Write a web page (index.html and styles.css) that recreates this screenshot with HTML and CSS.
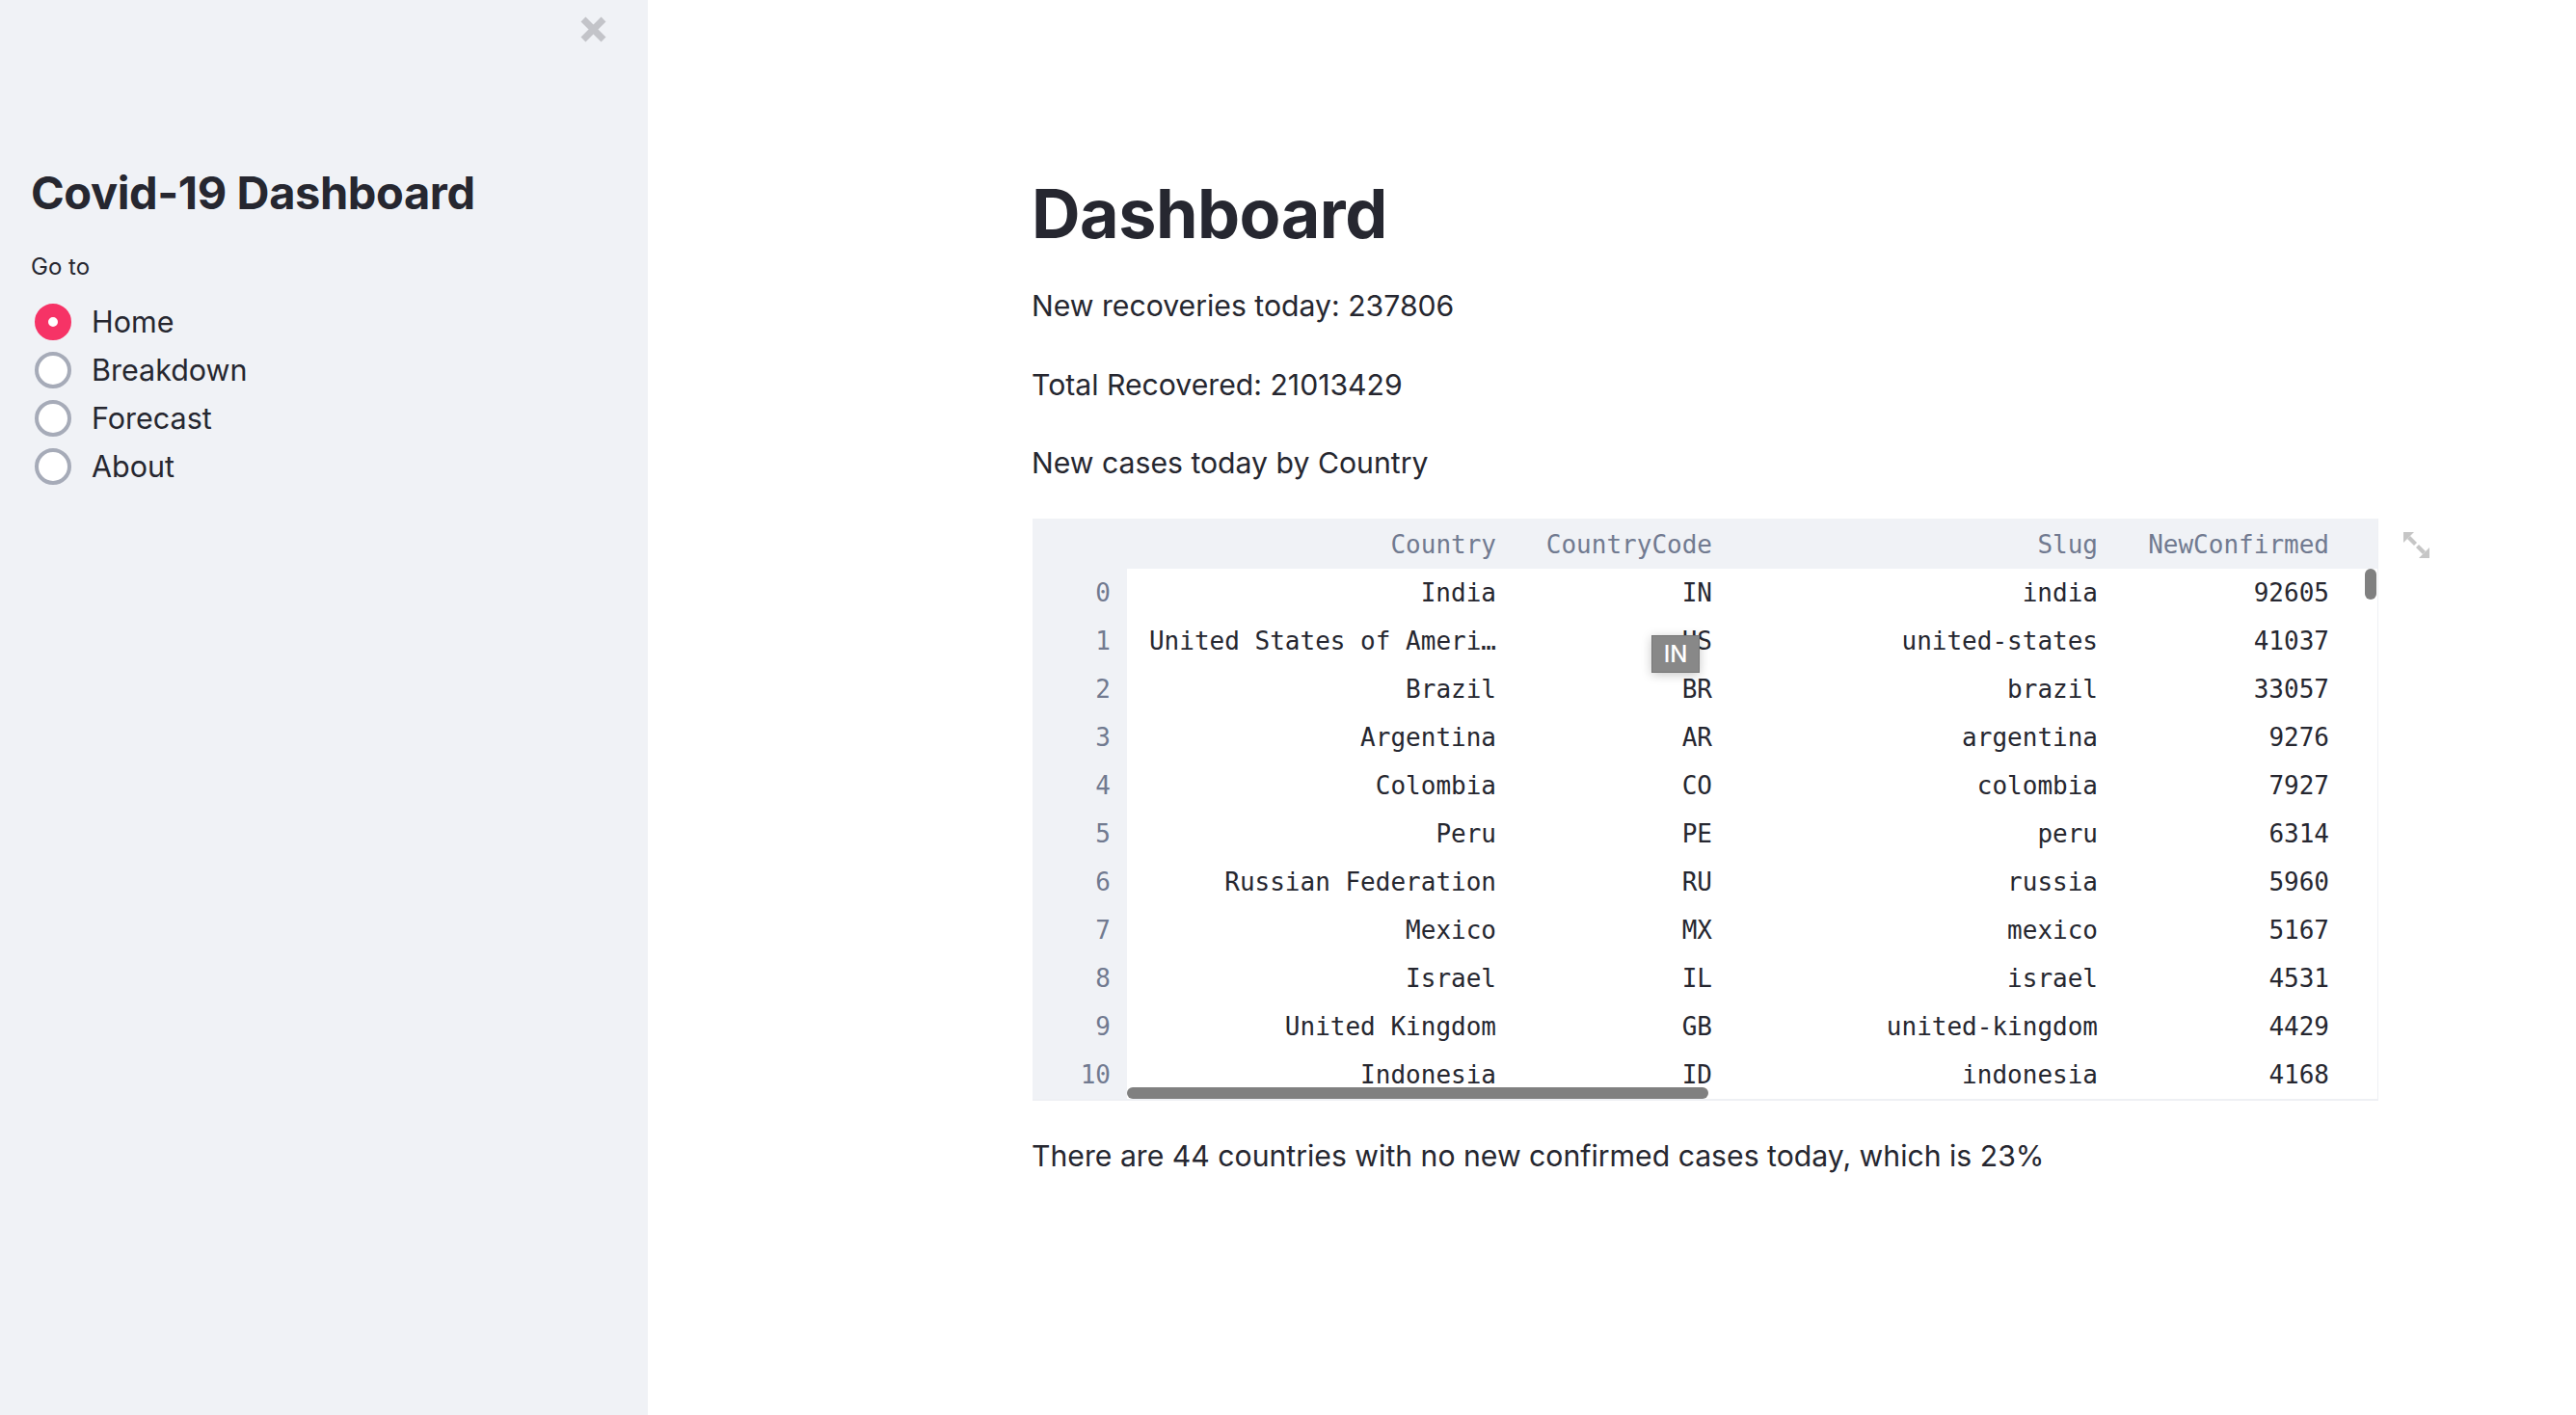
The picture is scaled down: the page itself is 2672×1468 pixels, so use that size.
FILE: index.html
```html
<!DOCTYPE html>
<html lang="en">
<head>
<meta charset="utf-8">
<title>Covid-19 Dashboard</title>
<link rel="stylesheet" href="styles.css">
</head>
<body>
<div class="app">
  <aside class="sidebar">
    <div class="sb-head">
      <button class="close" aria-label="Close sidebar">
        <svg width="27" height="27" viewBox="0 0 27 27"><path d="M3 3 L24 24 M24 3 L3 24" stroke="#c3c4c9" stroke-width="7" fill="none"/></svg>
      </button>
    </div>
    <h1 class="sb-title">Covid-19 Dashboard</h1>
    <div class="sb-label">Go to</div>
    <div class="radios">
      <label class="radio"><span class="circle on"></span><span class="radio-text">Home</span></label>
      <label class="radio"><span class="circle"></span><span class="radio-text">Breakdown</span></label>
      <label class="radio"><span class="circle"></span><span class="radio-text">Forecast</span></label>
      <label class="radio"><span class="circle"></span><span class="radio-text">About</span></label>
    </div>
  </aside>
  <main class="main">
    <h1 class="title">Dashboard</h1>
    <p class="txt">New recoveries today: 237806</p>
    <p class="txt">Total Recovered: 21013429</p>
    <p class="txt txt-last">New cases today by Country</p>
    <div class="df">
      <div class="row head">
        <div class="cell idx"></div>
        <div class="cell">Country</div>
        <div class="cell">CountryCode</div>
        <div class="cell">Slug</div>
        <div class="cell">NewConfirmed</div>
        <div class="cell"></div>
      </div>
      <div class="row"><div class="cell idx">0</div><div class="cell">India</div><div class="cell">IN</div><div class="cell">india</div><div class="cell">92605</div><div class="cell"></div></div>
      <div class="row"><div class="cell idx">1</div><div class="cell">United States of Ameri…</div><div class="cell">US</div><div class="cell">united-states</div><div class="cell">41037</div><div class="cell"></div></div>
      <div class="row"><div class="cell idx">2</div><div class="cell">Brazil</div><div class="cell">BR</div><div class="cell">brazil</div><div class="cell">33057</div><div class="cell"></div></div>
      <div class="row"><div class="cell idx">3</div><div class="cell">Argentina</div><div class="cell">AR</div><div class="cell">argentina</div><div class="cell">9276</div><div class="cell"></div></div>
      <div class="row"><div class="cell idx">4</div><div class="cell">Colombia</div><div class="cell">CO</div><div class="cell">colombia</div><div class="cell">7927</div><div class="cell"></div></div>
      <div class="row"><div class="cell idx">5</div><div class="cell">Peru</div><div class="cell">PE</div><div class="cell">peru</div><div class="cell">6314</div><div class="cell"></div></div>
      <div class="row"><div class="cell idx">6</div><div class="cell">Russian Federation</div><div class="cell">RU</div><div class="cell">russia</div><div class="cell">5960</div><div class="cell"></div></div>
      <div class="row"><div class="cell idx">7</div><div class="cell">Mexico</div><div class="cell">MX</div><div class="cell">mexico</div><div class="cell">5167</div><div class="cell"></div></div>
      <div class="row"><div class="cell idx">8</div><div class="cell">Israel</div><div class="cell">IL</div><div class="cell">israel</div><div class="cell">4531</div><div class="cell"></div></div>
      <div class="row"><div class="cell idx">9</div><div class="cell">United Kingdom</div><div class="cell">GB</div><div class="cell">united-kingdom</div><div class="cell">4429</div><div class="cell"></div></div>
      <div class="row"><div class="cell idx">10</div><div class="cell">Indonesia</div><div class="cell">ID</div><div class="cell">indonesia</div><div class="cell">4168</div><div class="cell"></div></div>
      <div class="vscroll"></div>
      <div class="hscroll"></div>
      <div class="tip">IN</div>
      <button class="expand" aria-label="View fullscreen">
        <svg width="29" height="29" viewBox="0 0 29 29" fill="#c6c6c6">
          <path d="M1 1 H12 L1 12 Z"/>
          <path d="M5 8 L8 5 L15 12 L12 15 Z"/>
          <path d="M28 28 H17 L28 17 Z"/>
          <path d="M24 21 L21 24 L14 17 L17 14 Z"/>
        </svg>
      </button>
    </div>
    <p class="txt">There are 44 countries with no new confirmed cases today, which is 23%</p>
  </main>
</div>
</body>
</html>
```

FILE: styles.css
```css
html, body {
  margin: 0;
  padding: 0;
}
body {
  font-family: Inter, "Open Sans", sans-serif;
  color: #262730;
  background: #ffffff;
}
.app {
  display: flex;
  min-height: 1468px;
}
.sidebar {
  width: 672px;
  flex: none;
  background: #f0f2f6;
  padding-left: 32px;
  box-sizing: border-box;
}
.sb-head {
  height: 172px;
  box-sizing: border-box;
  display: flex;
  justify-content: flex-end;
  align-items: flex-start;
  padding: 17px 43px 0 0;
}
.close {
  width: 27px;
  height: 27px;
  padding: 0;
  border: 0;
  background: none;
  display: block;
}
.close svg {
  display: block;
}
.sb-title {
  margin: 0;
  font-size: 47px;
  line-height: 1.2;
  font-weight: 700;
  letter-spacing: -0.4px;
  color: #262730;
}
.sb-label {
  margin-top: 31px;
  font-size: 24px;
  line-height: 36px;
  color: #262730;
}
.radios {
  margin-top: 14px;
  display: flex;
  flex-direction: column;
}
.radio {
  height: 50px;
  display: flex;
  align-items: center;
  gap: 21px;
  padding-left: 4px;
}
.circle {
  width: 38px;
  height: 38px;
  box-sizing: border-box;
  border-radius: 50%;
  border: 4px solid #a6abb8;
  background: #ffffff;
  flex: none;
}
.circle.on {
  border: 14px solid #f63366;
}
.radio-text {
  font-size: 30.5px;
  line-height: 1;
  color: #262730;
}
.main {
  flex: 1;
  padding: 180px 0 0 398px;
}
.title {
  margin: 0 0 29px;
  font-size: 70px;
  line-height: 1.2;
  font-weight: 700;
  letter-spacing: -0.5px;
  color: #262730;
}
.txt {
  margin: 0 0 32px;
  font-size: 30.2px;
  line-height: 49.6px;
  color: #262730;
}
.txt-last {
  margin-bottom: 32px;
}
.df {
  position: relative;
  width: 1396px;
  margin: 0 0 33px 1px;
  border-right: 1px solid #eef0f4;
  border-bottom: 2px solid #eef0f4;
  box-sizing: border-box;
  font-family: "DejaVu Sans Mono", "Liberation Mono", monospace;
  font-size: 26px;
}
.row {
  display: grid;
  grid-template-columns: 98px 400px 224px 400px 240px 1fr;
  height: 50px;
}
.row.head {
  height: 52px;
  background: #f0f2f6;
  color: #717a90;
}
.cell {
  padding: 0 17px;
  text-align: right;
  line-height: 50px;
  white-space: nowrap;
  overflow: hidden;
}
.head .cell {
  line-height: 54px;
}
.idx {
  background: #f0f2f6;
  color: #717a90;
}
.vscroll {
  position: absolute;
  left: 1382px;
  top: 52px;
  width: 12px;
  height: 32px;
  border-radius: 6px;
  background: #808080;
}
.hscroll {
  position: absolute;
  left: 98px;
  top: 590px;
  width: 603px;
  height: 12px;
  border-radius: 6px;
  background: #808080;
}
.tip {
  position: absolute;
  left: 642px;
  top: 121px;
  width: 50px;
  height: 39px;
  box-sizing: border-box;
  background: #888888;
  border: 1px solid #767676;
  color: #ffffff;
  font-family: Inter, "Open Sans", sans-serif;
  font-size: 24px;
  font-weight: 500;
  line-height: 37px;
  text-align: center;
  box-shadow: 0 2px 10px rgba(0, 0, 0, 0.22);
}
.expand {
  position: absolute;
  left: 1421px;
  top: 13px;
  width: 29px;
  height: 29px;
  padding: 0;
  border: 0;
  background: none;
}
.expand svg {
  display: block;
}
```
